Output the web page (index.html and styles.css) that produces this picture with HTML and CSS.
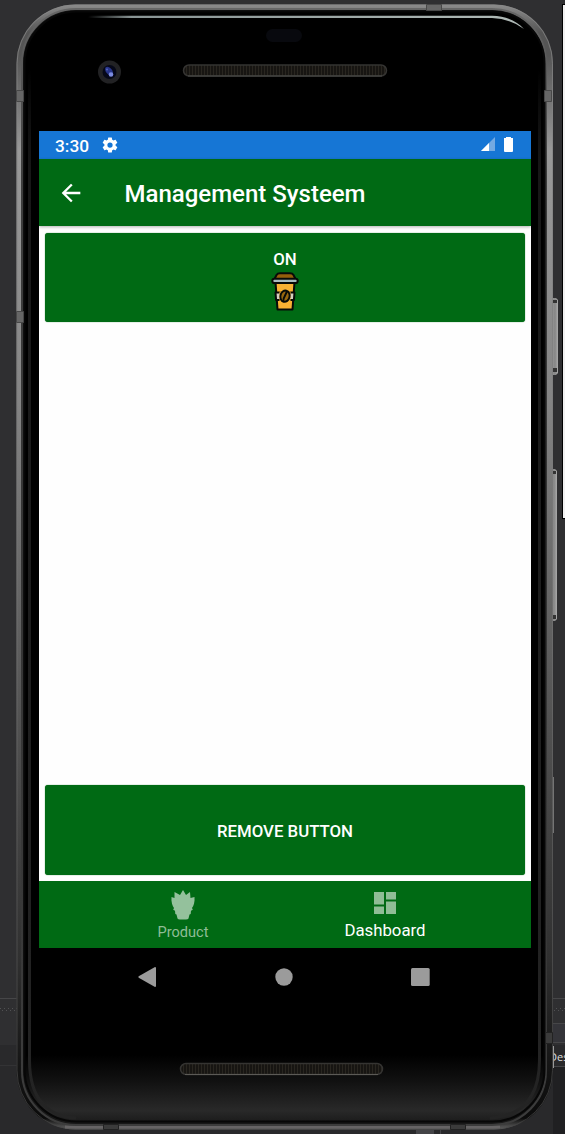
FILE: index.html
```
<!DOCTYPE html>
<html lang="en">
<head>
<meta charset="utf-8">
<title>Management Systeem</title>
<link rel="stylesheet" href="styles.css">
</head>
<body>
<div class="desktop">
  <svg class="device" width="565" height="1134" viewBox="0 0 565 1134" aria-hidden="true">
    <defs>
      <linearGradient id="rim" x1="0" y1="0" x2="0" y2="1">
        <stop offset="0" stop-color="#8b8b8b"/><stop offset=".025" stop-color="#555"/><stop offset=".045" stop-color="#555"/><stop offset=".13" stop-color="#999"/><stop offset=".35" stop-color="#858585"/><stop offset=".65" stop-color="#505050"/><stop offset=".85" stop-color="#303030"/><stop offset=".94" stop-color="#161616"/><stop offset=".99" stop-color="#0b0b0b"/><stop offset="1" stop-color="#666"/>
      </linearGradient>
      <linearGradient id="rimEdge" x1="0" y1="0" x2="0" y2="1">
        <stop offset="0" stop-color="#888"/><stop offset=".5" stop-color="#777"/><stop offset=".9" stop-color="#505050"/><stop offset="1" stop-color="#444"/>
      </linearGradient>
      <linearGradient id="rimInner" x1="0" y1="0" x2="0" y2="1">
        <stop offset="0" stop-color="#666"/><stop offset=".15" stop-color="#3e3e3e"/><stop offset=".5" stop-color="#343434"/><stop offset="1" stop-color="#3c3c3c"/>
      </linearGradient>
      <linearGradient id="glass" x1="0" y1="0" x2="0" y2="1">
        <stop offset="0" stop-color="#000"/><stop offset=".94" stop-color="#000"/><stop offset=".965" stop-color="#121212"/><stop offset=".99" stop-color="#292929"/><stop offset="1" stop-color="#1c1c1c"/>
      </linearGradient>
      <linearGradient id="shine" x1="0" y1="0" x2="1" y2="0">
        <stop offset="0" stop-color="#8a9595" stop-opacity="0"/><stop offset=".1" stop-color="#8a9595"/><stop offset="1" stop-color="#b0bab7"/>
      </linearGradient>
      <linearGradient id="sideFade" x1="0" y1="0" x2="0" y2="1">
        <stop offset="0" stop-color="#222" stop-opacity="0"/><stop offset=".1" stop-color="#171717"/><stop offset="1" stop-color="#242424"/>
      </linearGradient>
      <linearGradient id="metal"><stop offset="0" stop-color="#999"/><stop offset=".5" stop-color="#858585"/><stop offset="1" stop-color="#aaa"/></linearGradient>
      <linearGradient id="edgeTop"><stop offset="0" stop-color="#777"/><stop offset=".2" stop-color="#999"/><stop offset="1" stop-color="#aaa"/></linearGradient>
      <pattern id="mesh" width="3" height="2" patternUnits="userSpaceOnUse"><path fill="#171512" d="M0 0h3v2H0z"/><path fill="#292620" d="M0 0h1v2H0z"/></pattern>
      <pattern id="dots" width="4" height="4" patternUnits="userSpaceOnUse"><path fill="#515153" d="M0 0h1v1H0zM2 2h1v1H2z"/></pattern>
    </defs>
    <rect width="565" height="1134" fill="#2f2f31"/>
    <path fill="#29292b" d="M0 1045h565v89H0z"/>
    <path fill="#464648" d="M0 998h17v1H0zM553 998h12v1h-12zM553 1023h12v1h-12zM553 1042h12v1h-12zM553 1066h12v1h-12z"/>
    <path fill="#343439" d="M553 1024h12v18h-12z"/>
    <path fill="#333335" d="M0 1065h17v1H0z"/>
    <path fill="#202022" d="M553 1067h12v67h-12z"/>
    <path fill="url(#dots)" d="M0 1007h17v5H0zM553 1007h12v5h-12z"/>
    <path fill="#000" d="M562 4h3v515h-3z"/><path fill="#f1f1f1" d="M563 5h2v513h-2z"/>
    <path fill="#444447" d="M416 1130h18v4h-18zM440 1130h1v4h-1z"/>
    <path fill="url(#metal)" d="M552 298h4l2 2v73l-2 2h-4z"/>
    <path fill="url(#metal)" d="M551 469h4l2 2v148l-2 2h-4z"/>
    <path fill="#333" d="M552 300h5v3h-5zM552 368h5v4h-5zM551 471h5v3h-5zM551 615h5v4h-5z"/>
    <path fill="#747474" d="M553 777h1v56h-1z"/>
    <path fill="#999" d="M553 1046h1v22h-1z"/>
    <rect x="16.500" y="4.500" width="536.500" height="1125" rx="59" fill="url(#rim)"/>
    <rect x="17" y="5" width="535.500" height="1124" rx="58.500" fill="none" stroke="url(#rimEdge)" stroke-opacity=".7"/>
    <path d="M65 6H495" stroke="url(#edgeTop)" stroke-width="3"/>
    <path d="M65 1127H500" stroke="#666465" stroke-width="3"/>
    <rect x="22" y="9" width="524" height="1116" rx="54" fill="#181818" stroke="url(#rimInner)" stroke-width="2"/>
    <rect x="24.500" y="11.500" width="520" height="1110" rx="52" fill="url(#glass)" stroke="#070707" stroke-width="2"/>
    <path d="M29.500 70V1060Q29.500 1115 76 1118" fill="none" stroke="url(#sideFade)" stroke-width="3"/>
    <path d="M539.500 70V1060Q539.500 1115 490 1118" fill="none" stroke="url(#sideFade)" stroke-width="3"/>
    <path fill="url(#shine)" d="M88 15.700H492C506 16 517 21 524 29Q511 19 492 18H88z"/>
    <path fill="#666" stroke="#484848" d="M16.500 90.500h7v11h-7zM16.500 311.500h7v11h-7zM544.500 90.500h7v11h-7zM426.500 4.500h15v6h-15z"/>
    <path fill="#3b3b3b" stroke="#222" d="M103.500 1124.500h15v5h-15zM450.500 1124.500h15v5h-15zM545.500 1032.500h7v11h-7z"/>
    <rect x="266" y="29" width="36" height="13" rx="6.500" fill="#08090e"/>
    <rect x="183.500" y="65" width="203" height="11" rx="5.500" fill="url(#mesh)" stroke="#353432" stroke-width="1.500"/>
    <path d="M188 76H382" stroke="#4c4c4a"/>
    <rect x="180.500" y="1063.500" width="202" height="11" rx="5.500" fill="url(#mesh)" stroke="#353432" stroke-width="1.500"/>
    <path d="M185 1074.500H378" stroke="#5c5a56"/>
    <circle cx="109.500" cy="72" r="11.500" fill="#222224"/><circle cx="109.500" cy="72" r="7" fill="#060818"/>
    <ellipse cx="109" cy="71" rx="3" ry="5" transform="rotate(-40 109 71)" fill="#28358a"/><circle cx="111" cy="74.500" r="2.300" fill="#7c8be0"/><circle cx="107" cy="69.500" r="1" fill="#5668bd"/>
  </svg>
  <span class="behind">Des</span>
  <main class="screen">
    <div class="status">
      <span class="clock">3:30</span>
      <svg width="18" height="18" viewBox="0 0 24 24"><path fill="#fff" fill-rule="evenodd" d="M19.430 12.980c.04-.32.07-.64.07-.98s-.03-.66-.07-.98l2.110-1.650c.19-.15.24-.42.12-.64l-2-3.460c-.12-.22-.39-.3-.61-.22l-2.490 1c-.52-.4-1.080-.73-1.690-.98l-.38-2.650A.49.49 0 0 0 14 2h-4a.49.49 0 0 0-.49.42l-.38 2.650c-.61.25-1.170.59-1.690.98l-2.490-1a.5.5 0 0 0-.61.22l-2 3.460c-.13.22-.07.49.12.64l2.110 1.650c-.04.32-.07.65-.07.98s.03.66.07.98l-2.110 1.650c-.19.15-.24.42-.12.64l2 3.460c.12.22.39.3.61.22l2.490-1c.52.4 1.080.73 1.690.98l.38 2.650c.03.24.24.42.49.42h4c.25 0 .46-.18.49-.42l.38-2.650c.61-.25 1.170-.59 1.690-.98l2.490 1c.23.09.49 0 .61-.22l2-3.460a.5.5 0 0 0-.12-.64zM12 15.500a3.500 3.500 0 1 1 0-7 3.500 3.500 0 0 1 0 7z"/></svg>
      <svg class="signals" width="34" height="18" viewBox="0 0 34 18"><path fill="#74aae2" d="M15 1v14H1z"/><path fill="#fff" d="M9 7v8H1zM24 2h2V1h5v1h2v13q0 1-1 1h-7q-1 0-1-1z"/></svg>
    </div>
    <header class="appbar">
      <svg width="28" height="28" viewBox="0 0 24 24"><path fill="#fff" d="M20 11H7.830l5.590-5.590L12 4l-8 8 8 8 1.410-1.410L7.830 13H20z"/></svg>
      <h1 class="title">Management Systeem</h1>
    </header>
    <section class="content">
      <button class="tile first">
        <span>ON</span>
        <svg width="28" height="40" viewBox="0 0 28 40">
          <g stroke="#080b08" stroke-width="2" stroke-linejoin="round">
            <path fill="#f9b233" d="M4.500 10h19l-2 27.500h-15z"/>
            <path fill="#d7d0c0" d="M4.500 20.500h19l-.6 7.500H5.100z"/>
            <path fill="#f9b233" stroke="none" d="M8.500 19.500h11V29h-11z"/>
            <ellipse cx="14" cy="24.200" rx="4.600" ry="5.700" transform="rotate(14 14 24.200)" fill="#98670f"/>
            <path fill="none" d="M15.700 19c.3 3-4 6-3.300 10"/>
            <path fill="#945f0b" d="M3.500 7 5.500 3Q6.500 1.300 9 1.300h10q2.500 0 3.500 1.700l2 4z"/>
            <rect x="1.300" y="6.800" width="25.400" height="4.200" rx="2.100" fill="#a9bcc0"/>
          </g>
        </svg>
      </button>
      <button class="tile">REMOVE BUTTON</button>
    </section>
    <nav class="tabs">
      <a class="tab">
        <svg width="26" height="30" viewBox="0 0 26 30"><path fill="#94c19c" d="M13 0l3 5 4-3 .5 6 4-1c.5 5-1 9-2.500 11l.8 1.800-1.800 1-.3 3.200-1.200.5-1 4Q18 29.500 16 29.500h-6q-2 0-2.500-1l-1-4-1.200-.5-.3-3.200-1.800-1L4 18C2.500 16 1 12 1.500 7l3 1V2L10 5z"/></svg>
        <span>Product</span>
      </a>
      <a class="tab active">
        <svg width="24" height="24" viewBox="0 0 24 24"><path fill="#8fbd96" d="M1 1h10v12.500H1zM13 1h10v7.500H13zM1 15.500h10V23H1zM13 10.500h10V23H13z"/></svg>
        <span>Dashboard</span>
      </a>
    </nav>
    <div class="system">
      <svg width="18" height="20" viewBox="0 0 18 20"><path fill="#9b9b9b" d="M17 0q1 0 1 1v18q0 1-1 1L.7 10.700q-.7-.7 0-1.400z"/></svg>
      <svg width="18" height="18" viewBox="0 0 18 18"><circle cx="9" cy="9" r="8.700" fill="#9b9b9b"/></svg>
      <svg width="19" height="18" viewBox="0 0 19 18"><rect width="18.700" height="18" rx="1.500" fill="#9b9b9b"/></svg>
    </div>
  </main>
</div>
</body>
</html>
```

FILE: styles.css
```
* { box-sizing: border-box; }
body { margin: 0; font-family: Roboto, sans-serif; background: #2f2f31; }
.desktop { position: relative; width: 565px; height: 1134px; padding: 131px 34px 0 39px; overflow: hidden; }
.device { position: absolute; left: 0; top: 0; }
.behind { position: absolute; left: 554px; top: 1050px; width: 11px; overflow: hidden; color: #ddd; font: 11px/14px "Open Sans", sans-serif; text-indent: -5px; white-space: nowrap; }
.screen { position: relative; display: flex; flex-direction: column; width: 492px; height: 874px; color: #fff; }
.screen svg { display: block; flex: none; }
.status { height: 28px; display: flex; align-items: center; background: #1676d5; padding: 0 17px 0 16px; }
.clock { width: 46px; font-size: 17.3px; font-weight: 500; padding-top: 1px; }
.signals { margin-left: auto; }
.appbar { height: 67px; display: flex; align-items: center; background: #006a14; padding-left: 18px; position: relative; z-index: 1; box-shadow: 0 1px 3px rgba(0,0,0,.3); }
.title { margin: 3px 0 0 39.5px; font-size: 24px; font-weight: 500; line-height: 32px; white-space: nowrap; }
.content { height: 655px; display: flex; flex-direction: column; justify-content: space-between; padding: 7px 6px 6px; background: #fefefe; }
.tile { height: 90px; display: flex; flex-direction: column; align-items: center; justify-content: center; gap: 2px; padding: 2px 0 0; border: 0; border-radius: 3px; background: #006a14; box-shadow: 0 0 1px #006a14; color: #fff; font: 500 16.800px/22px Roboto, sans-serif; }
.first { height: 89px; padding-top: 5px; }
.tabs { height: 67px; display: flex; justify-content: center; background: #006a14; padding-right: 2px; }
.tab { width: 202px; display: flex; flex-direction: column; align-items: center; padding-top: 9px; color: #8fbd96; font-size: 14.600px; line-height: 22px; }
.tab span { margin-top: 1px; }
.active { color: #fff; font-size: 16.800px; padding-top: 10px; }
.active span { margin-top: 4px; }
.system { height: 57px; display: flex; align-items: center; background: #000; padding-left: 99px; }
.system svg + svg { margin-left: 118.500px; }
```
